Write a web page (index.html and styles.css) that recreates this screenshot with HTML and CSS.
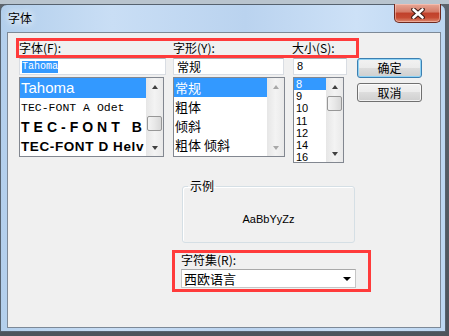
FILE: index.html
```html
<!DOCTYPE html>
<html lang="zh-CN">
<head>
    <meta charset="UTF-8">
    <title>字体</title>
    <link rel="stylesheet" href="styles.css">
</head>
<body>
    <div class="window">
        <div class="titlebar">
            <span class="title">字体</span>
            <button class="close">
                <svg width="14" height="11" viewBox="0 0 14 11">
                    <path d="M2.5 1.5 L11.5 9.5 M11.5 1.5 L2.5 9.5" stroke="#3b1a14" stroke-width="4.6" stroke-linecap="round"/>
                    <path d="M2.5 1.5 L11.5 9.5 M11.5 1.5 L2.5 9.5" stroke="#fff" stroke-width="2.6" stroke-linecap="round"/>
                </svg>
            </button>
        </div>

        <div class="client">
            <!-- column captions -->
            <div class="labels mark">
                <span>字体(F):</span>
                <span>字形(Y):</span>
                <span>大小(S):</span>
            </div>

            <div class="pickers">
                <div class="col col-font">
                    <div class="field"><span class="sel">Tahoma</span></div>
                    <div class="list">
                        <ul class="items">
                            <li class="active f-tahoma">Tahoma</li>
                            <li class="f-odet">TEC-FONT A Odet</li>
                            <li class="f-b">TEC-FONT&nbsp;B</li>
                            <li class="f-helv">TEC-FONT D Helv</li>
                        </ul>
                        <div class="scroll">
                            <span class="arr up"></span>
                            <span class="thumb thumb-font"></span>
                            <span class="arr down"></span>
                        </div>
                    </div>
                </div>

                <div class="col col-style">
                    <div class="field">常规</div>
                    <div class="list">
                        <ul class="items">
                            <li class="active">常规</li>
                            <li>粗体</li>
                            <li>倾斜</li>
                            <li>粗体 倾斜</li>
                        </ul>
                        <div class="scroll">
                            <span class="arr up off"></span>
                            <span class="arr down off"></span>
                        </div>
                    </div>
                </div>

                <div class="col col-size">
                    <div class="field">8</div>
                    <div class="list">
                        <ul class="items">
                            <li class="active">8</li>
                            <li>9</li>
                            <li>10</li>
                            <li>11</li>
                            <li>12</li>
                            <li>14</li>
                            <li>16</li>
                        </ul>
                        <div class="scroll">
                            <span class="arr up"></span>
                            <span class="thumb thumb-size"></span>
                            <span class="arr down"></span>
                        </div>
                    </div>
                </div>

                <div class="buttons">
                    <button class="btn default">确定</button>
                    <button class="btn">取消</button>
                </div>
            </div>

            <fieldset class="sample">
                <legend>示例</legend>
                <div class="preview">AaBbYyZz</div>
            </fieldset>

            <div class="charset mark">
                <div class="charset-label">字符集(R):</div>
                <div class="combo">西欧语言<span class="drop"></span></div>
            </div>
        </div>
    </div>
</body>
</html>
```

FILE: styles.css
```css
/* Base */
* {
    box-sizing: border-box;
}

body {
    margin: 0;
    width: 449px;
    height: 336px;
    overflow: hidden;
    background: linear-gradient(180deg, #b9c4ce 0, #b9c4ce 4px, #5d646c 4px, #4d545c 100%);
    font-family: "Noto Sans CJK SC", sans-serif;
    font-size: 12px;
    color: #000;
}

/* Window frame */
.window {
    margin-top: 4px;
    width: 446px;
    height: 328px;
    border: 1px solid #56626f;
    border-radius: 7px 7px 0 0;
    padding: 0 4px 3px 6px;
    background: linear-gradient(90deg, #b3cfec 0, #c9def5 25%, #bad3ef 55%, #cde1f7 80%, #bcd6f1 100%);
}

.titlebar {
    height: 27px;
    display: flex;
    justify-content: space-between;
    align-items: flex-start;
}

.title {
    margin: 6px 0 0 1px;
    line-height: 14px;
    text-shadow: 0 0 6px #fff, 0 0 10px #fff;
}

.close {
    margin-top: -1px;
    width: 47px;
    height: 19px;
    padding: 0;
    border: 1px solid #6e2a20;
    border-top: none;
    border-radius: 0 0 5px 5px;
    background: linear-gradient(180deg, #e8a796 0, #d47a66 45%, #c0402a 50%, #c64a32 75%, #dc8a70 100%);
    display: flex;
    justify-content: center;
    align-items: center;
    box-shadow: inset 0 0 0 1px rgba(255, 210, 200, 0.5);
}

/* Client area */
.client {
    width: 434px;
    height: 296px;
    border: 1px solid #7d8997;
    background: #f0f0f0;
    padding: 5px 0 0 8px;
}

.mark {
    border: 3px solid #ff3b3b;
}

.labels {
    width: 343px;
    height: 20px;
    display: grid;
    grid-template-columns: 154px 119px 1fr;
    line-height: 14px;
}

.pickers {
    display: flex;
    margin-left: 3px;
    height: 105px;
}

.col-font {
    width: 154px;
}

.col-style {
    width: 120px;
}

.col-size {
    width: 64px;
}

.field {
    height: 17px;
    margin-bottom: 2px;
    background: #fff;
    border: 1px solid #d9dde3;
    border-top-color: #abadb3;
    line-height: 15px;
    padding-left: 2px;
}

.col-font .field {
    width: 147px;
    font-family: "Liberation Mono", monospace;
    font-size: 10px;
}

.sel {
    background: #3399ff;
    color: #fff;
    padding: 0 0 1px;
}

.col-style .field {
    width: 111px;
    padding-left: 3px;
}

.col-size .field {
    width: 54px;
    padding-left: 3px;
    font-family: "Liberation Sans", sans-serif;
    font-size: 11px;
}

/* List boxes */
.list {
    display: flex;
    border: 1px solid #828790;
    background: #fff;
    height: 80px;
}

.col-font .list {
    width: 145px;
}

.col-style .list {
    width: 112px;
}

.col-size .list {
    width: 51px;
    height: 86px;
}

.items {
    flex: 1;
    min-width: 0;
    list-style: none;
    margin: 0;
    padding: 0;
    overflow: hidden;
    white-space: nowrap;
}

.items li.active {
    background: #3399ff;
    color: #fff;
}

.col-font li {
    height: 19.5px;
    padding-left: 1px;
    display: flex;
    align-items: center;
}

.f-tahoma {
    font-family: "Liberation Sans", sans-serif;
    font-size: 15px;
}

.f-odet {
    font-family: "Liberation Mono", monospace;
    font-size: 11.5px;
}

.f-b {
    font-family: "Liberation Sans", sans-serif;
    font-weight: bold;
    font-size: 14px;
    letter-spacing: 4px;
}

.f-helv {
    font-family: "Liberation Sans", sans-serif;
    font-weight: bold;
    font-size: 13.5px;
    letter-spacing: 0.6px;
}

.col-style li {
    height: 19px;
    line-height: 19px;
    padding-left: 1px;
    font-size: 13px;
}

.col-size li {
    height: 12.2px;
    line-height: 12px;
    padding-left: 2px;
    font-family: "Liberation Sans", sans-serif;
    font-size: 11px;
}

/* Scrollbars */
.scroll {
    width: 17px;
    flex-shrink: 0;
    display: flex;
    flex-direction: column;
    background: linear-gradient(90deg, #e6e6e6, #f3f3f3 50%, #e9e9e9);
}

.arr {
    height: 17px;
    display: flex;
    justify-content: center;
    align-items: center;
}

.arr::after {
    content: "";
    border-left: 3.5px solid transparent;
    border-right: 3.5px solid transparent;
}

.arr.up::after {
    border-bottom: 4px solid #404040;
}

.arr.down {
    margin-top: auto;
}

.arr.down::after {
    border-top: 4px solid #404040;
}

.arr.off.up::after {
    border-bottom-color: #a8a8a8;
}

.arr.off.down::after {
    border-top-color: #a8a8a8;
}

.thumb {
    margin: 0 1px;
    height: 15px;
    border: 1px solid #979797;
    border-radius: 2px;
    background: linear-gradient(90deg, #f4f4f4, #e8e8e8 50%, #d8d8d8);
}

.thumb-font {
    margin-top: 21px;
}

.thumb-size {
    margin-top: 1px;
}

/* Buttons */
.buttons {
    width: 64px;
    display: flex;
    flex-direction: column;
    gap: 5px;
}

.btn {
    width: 65px;
    height: 19px;
    padding: 0;
    border: 1px solid #707070;
    border-radius: 3px;
    background: linear-gradient(180deg, #f2f2f2 0, #ebebeb 50%, #dddddd 50%, #cfcfcf 100%);
    font-family: "Noto Sans CJK SC", sans-serif;
    font-size: 12px;
    line-height: 16px;
    box-shadow: inset 0 0 0 1px rgba(255, 255, 255, 0.7);
}

.btn.default {
    height: 20px;
    border-color: #3c7fb1;
    box-shadow: inset 0 0 0 1px #8fd3f5;
}

/* Sample group */
.sample {
    margin: 16px 0 0 166px;
    width: 173px;
    height: 64px;
    padding: 0;
    border: 1px solid #d5dfe5;
    border-radius: 3px;
    box-shadow: inset 1px 1px 0 #fff;
}

.sample legend {
    margin-left: 5px;
    padding: 0 2px;
    line-height: 14px;
}

.preview {
    margin-top: 19px;
    text-align: center;
    font-family: "Liberation Sans", sans-serif;
    font-size: 11px;
    line-height: 14px;
}

/* Charset */
.charset {
    margin: 7px 0 0 156px;
    width: 199px;
    height: 42px;
    padding-left: 6px;
}

.charset-label {
    line-height: 14px;
}

.combo {
    margin-top: 2px;
    width: 175px;
    height: 19px;
    border: 1px solid #c6c6c6;
    border-top-color: #a9a9a9;
    background: #fff;
    display: flex;
    align-items: center;
    padding-left: 2px;
    font-size: 13px;
}

.drop {
    margin-left: auto;
    margin-right: 4px;
    border-left: 4px solid transparent;
    border-right: 4px solid transparent;
    border-top: 4px solid #000;
}
```
